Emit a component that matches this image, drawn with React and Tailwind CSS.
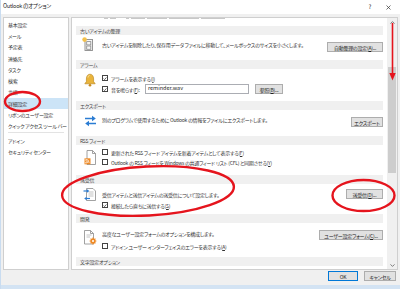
import React from "react";

const Cb = ({ checked }) => (
  <span className="w-[6px] h-[6px] border border-[#444] bg-white flex items-center justify-center shrink-0">
    {checked && (
      <svg width="5" height="5" viewBox="0 0 10 10">
        <path d="M1.5 5.2 L4 7.6 L8.6 2.4" stroke="#222" strokeWidth="1.7" fill="none" />
      </svg>
    )}
  </span>
);

const Btn = ({ children, className }) => (
  <div className={"h-[10px] border border-[#adadad] bg-[#e1e1e1] flex items-center justify-center text-[5px] leading-none text-[#222] shrink-0 " + className}>
    {children}
  </div>
);

const Header = ({ children }) => (
  <div className="h-[9px] bg-[#f0f0f0] flex items-center pl-[4px] text-[5px] leading-none text-[#444]">{children}</div>
);

const IconArchive = () => (
  <svg width="12" height="14" viewBox="0 0 12 14">
    <rect x="3" y="2.5" width="7.5" height="11" fill="#f6f6f6" stroke="#8a8a8a" strokeWidth="0.9" />
    <rect x="4.7" y="4.6" width="4.1" height="3.3" fill="none" stroke="#8a8a8a" strokeWidth="0.8" />
    <rect x="4.7" y="9" width="4.1" height="3.3" fill="none" stroke="#8a8a8a" strokeWidth="0.8" />
    <circle cx="2.6" cy="2.6" r="2.3" fill="#f3c14b" />
  </svg>
);

const IconBell = () => (
  <svg width="14" height="14" viewBox="0 0 14 14">
    <path d="M7 1.2 C4.4 1.2 3.4 3.4 3.4 6 L3.4 8.6 L1.8 10.8 L12.2 10.8 L10.6 8.6 L10.6 6 C10.6 3.4 9.6 1.2 7 1.2Z" fill="#e9b43c" stroke="#b57f16" strokeWidth="0.6" />
    <path d="M5 4.5 C5 3.4 5.7 2.6 6.6 2.5" stroke="#fbe6a6" strokeWidth="0.9" fill="none" />
    <circle cx="7" cy="12.2" r="1.3" fill="#c78a1c" />
  </svg>
);

const IconExport = () => (
  <svg width="13" height="12" viewBox="0 0 13 12">
    <path d="M1 3.5 H8.5" stroke="#2b7cd3" strokeWidth="1.5" />
    <path d="M8 0.8 L11.8 3.5 L8 6.2Z" fill="#2b7cd3" />
    <path d="M12 8.5 H4.5" stroke="#2b7cd3" strokeWidth="1.5" />
    <path d="M5 5.8 L1.2 8.5 L5 11.2Z" fill="#2b7cd3" />
  </svg>
);

const IconRss = () => (
  <svg width="13" height="15" viewBox="0 0 13 15">
    <path d="M3 0.5 H8.5 L11.5 3.5 V14.5 H3Z" fill="#fff" stroke="#8a8a8a" strokeWidth="0.8" />
    <path d="M8.5 0.5 V3.5 H11.5" fill="none" stroke="#8a8a8a" strokeWidth="0.8" />
    <rect x="0.5" y="8.3" width="6" height="6" fill="#ef8a25" />
    <circle cx="2" cy="12.8" r="0.7" fill="#fff" />
    <path d="M1.4 10.6 a2.3 2.3 0 0 1 2.3 2.3 M1.4 9.2 a3.7 3.7 0 0 1 3.7 3.7" stroke="#fff" strokeWidth="0.7" fill="none" />
  </svg>
);

const IconSendRecv = () => (
  <svg width="14" height="13" viewBox="0 0 14 13">
    <path d="M3.5 0.5 H10 L12.5 3 V12.5 H3.5Z" fill="#fff" stroke="#8a8a8a" strokeWidth="0.8" />
    <path d="M5.5 4 H10.5 M5.5 6 H10.5 M5.5 8 H10.5" stroke="#9a9a9a" strokeWidth="0.6" />
    <path d="M0.5 3 H4.5" stroke="#2b7cd3" strokeWidth="1.2" />
    <path d="M4 1.3 L6.3 3 L4 4.7Z" fill="#2b7cd3" />
    <path d="M7 10.5 H3" stroke="#2b7cd3" strokeWidth="1.2" />
    <path d="M3.5 8.8 L1.2 10.5 L3.5 12.2Z" fill="#2b7cd3" />
  </svg>
);

const IconDev = () => (
  <svg width="14" height="15" viewBox="0 0 14 15">
    <path d="M1.5 0.5 H7.5 L10.5 3.5 V14 H1.5Z" fill="#fff" stroke="#8a8a8a" strokeWidth="0.8" />
    <path d="M7.5 0.5 V3.5 H10.5" fill="none" stroke="#8a8a8a" strokeWidth="0.8" />
    <path d="M3.5 5 H8.5 M3.5 7 H7" stroke="#9a9a9a" strokeWidth="0.6" />
    <circle cx="10" cy="11" r="2.6" fill="#ef8a25" />
    <path d="M10 7.6 V14.4 M6.6 11 H13.4 M7.6 8.6 L12.4 13.4 M12.4 8.6 L7.6 13.4" stroke="#ef8a25" strokeWidth="1.2" />
    <circle cx="10" cy="11" r="1" fill="#fff" />
  </svg>
);

const navItems = [
  "基本設定",
  "メール",
  "予定表",
  "連絡先",
  "タスク",
  "検索",
  "言語",
  "詳細設定",
  "リボンのユーザー設定",
  "クイック アクセス ツール バー",
];

export default function App() {
  return (
    <div className="relative w-[400px] h-[289px] overflow-hidden bg-[#f0f0f0] border-l border-[#c9dcf0] font-['Noto_Sans_CJK_JP','Noto_Sans',sans-serif] [font-feature-settings:'palt'] tracking-[-0.25px] text-[#333]">
      {/* title bar */}
      <div className="w-full h-[14px] bg-white flex items-center pl-[2px] pr-[9px] text-[5.5px] leading-none text-[#222]">
        <span>Outlook のオプション</span>
        <span className="ml-auto text-[6px]">?</span>
        <svg className="ml-[15px]" width="5" height="5" viewBox="0 0 5 5">
          <path d="M0.5 0.5 L4.5 4.5 M4.5 0.5 L0.5 4.5" stroke="#333" strokeWidth="0.7" />
        </svg>
      </div>

      {/* body */}
      <div className="w-full flex h-[256px] pt-[3px] pl-[2px] pr-[2px] gap-[2px]">
        {/* nav */}
        <div className="w-[66px] shrink-0 h-[253px] bg-white border border-[#cfcfcf] pt-[0.5px] text-[5px] leading-none">
          {navItems.map((t) => (
            <div
              key={t}
              className={
                t === "詳細設定"
                  ? "h-[11.3px] flex items-center pl-[4px] bg-[#cce4f7] whitespace-nowrap"
                  : "h-[11.3px] flex items-center pl-[4px] whitespace-nowrap"
              }
            >
              {t}
            </div>
          ))}
          <div className="h-[3px] flex items-center px-[4px]">
            <div className="h-[1px] w-full bg-[#e3e3e3]" />
          </div>
          <div className="h-[11.3px] flex items-center pl-[4px]">アドイン</div>
          <div className="h-[11.3px] flex items-center pl-[4px]">セキュリティ センター</div>
        </div>

        {/* right panel */}
        <div className="flex-1 min-w-0 h-[253px] bg-white border border-[#cfcfcf] flex">
          <div className="flex-1 min-w-0 overflow-hidden px-[4px] text-[5px] leading-none">
            {/* partially scrolled line */}
            <div className="h-[8px] flex items-start gap-[2px] pl-[28px]">
              <div className="w-[4px] h-[1px] bg-[#c8c8c8]" />
              <div className="w-[6px] h-[1px] bg-[#c8c8c8]" />
              <div className="w-[3px] h-[1px] bg-[#c8c8c8] ml-[8px]" />
              <div className="w-[14px] h-[1px] bg-[#c8c8c8]" />
              <div className="w-[20px] h-[1px] bg-[#c8c8c8]" />
              <div className="w-[30px] h-[1px] bg-[#c8c8c8]" />
              <div className="w-[24px] h-[1px] bg-[#c8c8c8]" />
            </div>

            {/* 古いアイテムの整理 */}
            <Header>古いアイテムの整理</Header>
            <div className="h-[25px] flex">
              <div className="w-[26px] shrink-0 pl-[6px] pt-[2px]">
                <IconArchive />
              </div>
              <div className="flex-1 pt-[5.5px]">
                <div className="h-[7px] flex items-center whitespace-nowrap">古いアイテムを削除したり、保存用データ ファイルに移動して、メールボックスのサイズを小さくします。</div>
              </div>
              <Btn className="w-[56px] mt-[7px]">
                <span>
                  自動整理の設定(<u>A</u>)...
                </span>
              </Btn>
            </div>

            {/* アラーム */}
            <Header>アラーム</Header>
            <div className="h-[32px] flex">
              <div className="w-[26px] shrink-0 pl-[7px] pt-[4px]">
                <IconBell />
              </div>
              <div className="flex-1 pt-[4px]">
                <div className="h-[10px] flex items-center">
                  <Cb checked />
                  <span className="ml-[3px]">
                    アラームを表示する(<u>I</u>)
                  </span>
                </div>
                <div className="h-[10px] mt-[1px] flex items-center">
                  <Cb checked />
                  <span className="ml-[3px] w-[34px]">
                    音を鳴らす(<u>F</u>):
                  </span>
                  <div className="w-[104px] h-[10px] border border-[#abadb3] bg-white flex items-center pl-[2px] text-[5.5px] tracking-normal text-[#222]">
                    reminder.wav
                  </div>
                  <Btn className="w-[28px] ml-[6px]">
                    <span>
                      参照(<u>B</u>)...
                    </span>
                  </Btn>
                </div>
              </div>
            </div>

            {/* エクスポート */}
            <Header>エクスポート</Header>
            <div className="h-[26px] flex">
              <div className="w-[26px] shrink-0 pl-[8px] pt-[5px]">
                <IconExport />
              </div>
              <div className="flex-1 pt-[4px]">
                <div className="h-[10px] flex items-center whitespace-nowrap">別のプログラムで使用するために Outlook の情報をファイルにエクスポートします。</div>
              </div>
              <Btn className="w-[32px] mt-[7px]">エクスポート</Btn>
            </div>

            {/* RSS フィード */}
            <Header>RSS フィード</Header>
            <div className="h-[30px] flex">
              <div className="w-[26px] shrink-0 pl-[8px] pt-[5px]">
                <IconRss />
              </div>
              <div className="flex-1 pt-[2px]">
                <div className="h-[10px] flex items-center whitespace-nowrap">
                  <Cb />
                  <span className="ml-[3px]">
                    更新された RSS フィード アイテムを新着アイテムとして表示する(<u>F</u>)
                  </span>
                </div>
                <div className="h-[10px] flex items-center whitespace-nowrap">
                  <Cb />
                  <span className="ml-[3px]">
                    Outlook の RSS フィードを Windows の共通フィード リスト (CFL) と同期させる(<u>Y</u>)
                  </span>
                </div>
              </div>
            </div>

            {/* 送受信 */}
            <Header>送受信</Header>
            <div className="h-[30px] flex">
              <div className="w-[26px] shrink-0 pl-[7px] pt-[4px]">
                <IconSendRecv />
              </div>
              <div className="flex-1 pt-[5px]">
                <div className="h-[10px] flex items-center whitespace-nowrap">受信アイテムと送信アイテムの送受信について設定します。</div>
                <div className="h-[10px] mt-[1px] flex items-center whitespace-nowrap">
                  <Cb checked />
                  <span className="ml-[3px]">
                    接続したら直ちに送信する(<u>S</u>)
                  </span>
                </div>
              </div>
              <Btn className="w-[37px] mt-[5px]">
                <span>
                  送受信(<u>D</u>)...
                </span>
              </Btn>
            </div>

            {/* 開発 */}
            <Header>開発</Header>
            <div className="h-[34px] flex">
              <div className="w-[26px] shrink-0 pl-[7px] pt-[7px]">
                <IconDev />
              </div>
              <div className="flex-1 pt-[5px]">
                <div className="h-[10px] flex items-center whitespace-nowrap">高度なユーザー設定フォームのオプションを構成します。</div>
                <div className="h-[10px] mt-[3px] flex items-center whitespace-nowrap">
                  <Cb />
                  <span className="ml-[3px]">
                    アドイン ユーザー インターフェイスのエラーを表示する(<u>A</u>)
                  </span>
                </div>
              </div>
              <Btn className="w-[64px] mt-[7px]">
                <span>
                  ユーザー設定フォーム(<u>C</u>)...
                </span>
              </Btn>
            </div>

            {/* 文字設定オプション */}
            <Header>文字設定オプション</Header>
          </div>

          {/* scrollbar */}
          <div className="w-[10px] shrink-0 bg-[#f0f0f0] flex flex-col items-center">
            <div className="h-[8px] flex items-center justify-center">
              <svg width="5" height="3" viewBox="0 0 5 3">
                <path d="M0.5 2.6 L2.5 0.6 L4.5 2.6" stroke="#606060" strokeWidth="0.8" fill="none" />
              </svg>
            </div>
            <div className="h-[41px]" />
            <div className="w-[8px] h-[106px] bg-[#cdcdcd]" />
            <div className="flex-1" />
            <div className="h-[8px] flex items-center justify-center">
              <svg width="5" height="3" viewBox="0 0 5 3">
                <path d="M0.5 0.4 L2.5 2.4 L4.5 0.4" stroke="#606060" strokeWidth="0.8" fill="none" />
              </svg>
            </div>
          </div>
        </div>
      </div>

      {/* bottom buttons */}
      <div className="w-full h-[15px] flex justify-end items-start pt-[1px] pr-[4px] gap-[6px]">
        <div className="w-[30px] shrink-0 h-[10px] border border-[#0078d7] bg-[#e1e1e1] flex items-center justify-center text-[5px] leading-none text-[#222]">OK</div>
        <div className="w-[32px] shrink-0 h-[10px] border border-[#adadad] bg-[#e1e1e1] flex items-center justify-center text-[5px] leading-none text-[#222]">キャンセル</div>
      </div>
      <div className="w-full h-[4px] bg-[#d3e3f3]" />

      {/* red annotations */}
      <svg className="absolute left-0 top-0 pointer-events-none" width="400" height="289" viewBox="0 0 400 289">
        <ellipse cx="21.5" cy="101.5" rx="17.5" ry="9.5" fill="none" stroke="#e5141d" strokeWidth="2.4" />
        <ellipse cx="147" cy="191" rx="86" ry="24.5" transform="rotate(-3 147 191)" fill="none" stroke="#e5141d" strokeWidth="2.4" />
        <ellipse cx="362.5" cy="195.5" rx="31" ry="15.5" fill="none" stroke="#e5141d" strokeWidth="2.4" />
        <line x1="391.5" y1="23" x2="391.5" y2="74" stroke="#e5141d" strokeWidth="1.6" />
        <path d="M388.3 73 L394.7 73 L391.5 80.5Z" fill="#e5141d" />
      </svg>
    </div>
  );
}
